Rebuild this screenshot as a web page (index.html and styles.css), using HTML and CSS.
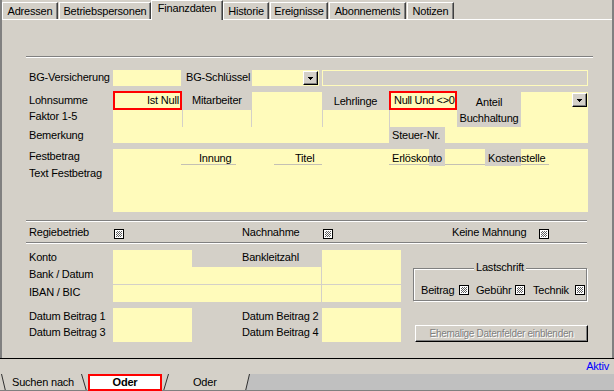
FILE: index.html
```html
<!DOCTYPE html>
<html lang="de">
<head>
<meta charset="utf-8">
<title>Finanzdaten</title>
<link rel="stylesheet" href="styles.css">
</head>
<body>
<div class="main">
  <div class="tabs">
    <div class="tab t-adr">Adressen</div>
    <div class="tab t-bet">Betriebspersonen</div>
    <div class="tab sel t-fin">Finanzdaten</div>
    <div class="tab t-his">Historie</div>
    <div class="tab t-ere">Ereignisse</div>
    <div class="tab t-abo">Abonnements</div>
    <div class="tab t-not">Notizen</div>
  </div>
  <div class="panel">
    <div class="sep sep1"></div>

    <div class="lbl l-bgv">BG-Versicherung</div>
    <div class="y f-bgv"></div>
    <div class="lbl l-bgs">BG-Schlüssel</div>
    <div class="y f-bgs"><div class="dd"><svg width="5" height="3" viewBox="0 0 5 3" shape-rendering="crispEdges"><rect x="0" y="0" width="5" height="1"/><rect x="1" y="1" width="3" height="1"/><rect x="2" y="2" width="1" height="1"/></svg></div></div>
    <div class="f-bgx"></div>

    <div class="lbl l-lohn">Lohnsumme</div>
    <div class="red red1">Ist Null</div>
    <div class="lbl l-mit">Mitarbeiter</div>
    <div class="y f-mit"></div>
    <div class="box box-lehr">Lehrlinge</div>
    <div class="red red2">Null Und &lt;&gt;0</div>
    <div class="box box-ant">Anteil<br>Buchhaltung</div>
    <div class="y f-ant"><div class="dd"><svg width="5" height="3" viewBox="0 0 5 3" shape-rendering="crispEdges"><rect x="0" y="0" width="5" height="1"/><rect x="1" y="1" width="3" height="1"/><rect x="2" y="2" width="1" height="1"/></svg></div></div>

    <div class="lbl l-fak">Faktor 1-5</div>
    <div class="faktor">
      <div class="fk fk1"></div>
      <div class="fk fk2"></div>
      <div class="fk fk3"></div>
      <div class="fk fk4"></div>
      <div class="fk fk5"></div>
    </div>
    <div class="lbl l-bem">Bemerkung</div>
    <div class="y f-bem"></div>
    <div class="box box-steu">Steuer-Nr.</div>
    <div class="y f-steu"></div>

    <div class="lbl l-fest">Festbetrag</div>
    <div class="lbl l-tfest">Text Festbetrag</div>
    <div class="y f-fest"></div>
    <div class="uline"></div>
    <div class="ul ul-inn">Innung</div>
    <div class="ul ul-tit">Titel</div>
    <div class="gbox g-erl"></div>
    <div class="gbox g-kost"></div>
    <div class="lbl l-erl">Erlöskonto</div>
    <div class="lbl l-kost">Kostenstelle</div>

    <div class="sep sep2"></div>
    <div class="lbl l-regie">Regiebetrieb</div>
    <div class="cb cb-regie"></div>
    <div class="lbl l-nach">Nachnahme</div>
    <div class="cb cb-nach"></div>
    <div class="lbl l-keine">Keine Mahnung</div>
    <div class="cb cb-keine"></div>
    <div class="sep sep3"></div>

    <div class="lbl l-konto">Konto</div>
    <div class="y f-konto"></div>
    <div class="lbl l-blz">Bankleitzahl</div>
    <div class="y f-blz"></div>
    <div class="lbl l-bank">Bank / Datum</div>
    <div class="y f-bank"></div>
    <div class="lbl l-iban">IBAN / BIC</div>
    <div class="y f-iban"></div>
    <div class="hl"></div>

    <div class="lbl l-db1">Datum Beitrag 1</div>
    <div class="lbl l-db3">Datum Beitrag 3</div>
    <div class="y f-db13"></div>
    <div class="lbl l-db2">Datum Beitrag 2</div>
    <div class="lbl l-db4">Datum Beitrag 4</div>
    <div class="y f-db24"></div>

    <div class="grp">
      <div class="grp-title"><span>Lastschrift</span></div>
      <span class="gl gl-bei">Beitrag</span><span class="cb"></span>
      <span class="gl gl-geb">Gebühr</span><span class="cb"></span>
      <span class="gl gl-tec">Technik</span><span class="cb"></span>
    </div>

    <div class="btn">Ehemalige Datenfelder einblenden</div>
  </div>
</div>
<div class="status">Aktiv</div>
<div class="navtabs">
  <svg class="navsvg" width="614" height="17" viewBox="0 0 614 17">
    <polygon points="0,0 249.5,0 245.5,17 0,17" fill="#d4d0c8"/>
    <line x1="1.5" y1="0" x2="5.5" y2="17" stroke="#303030"/>
    <line x1="81.5" y1="0" x2="86.5" y2="17" stroke="#303030"/>
    <line x1="168.5" y1="0" x2="163.5" y2="17" stroke="#303030"/>
    <line x1="249.5" y1="0" x2="245.5" y2="17" stroke="#303030"/>
    <line x1="0" y1="16.5" x2="614" y2="16.5" stroke="#808080"/>
  </svg>
  <div class="nt nt1">Suchen nach</div>
  <div class="nt nt-sel">Oder</div>
  <div class="nt nt3">Oder</div>
</div>
</body>
</html>
```

FILE: styles.css
```css
* { box-sizing: border-box; }
html, body { margin: 0; padding: 0; }
body {
  width: 614px;
  height: 391px;
  overflow: hidden;
  background: #d4d0c8;
  font-family: "Liberation Sans", Arial, sans-serif;
  font-size: 11px;
  letter-spacing: -0.2px;
  color: #000;
}

/* ---------- top frame + tabs ---------- */
.main {
  height: 358px;
  border-left: 2px solid #808080;
  border-right: 2px solid #808080;
  display: flex;
  flex-direction: column;
}
.tabs {
  display: flex;
  align-items: flex-start;
  height: 19px;
  flex: none;
  position: relative;
  z-index: 2;
}
.tab {
  height: 17px;
  margin-top: 2px;
  border-top: 1px solid #fff;
  border-left: 1px solid #fff;
  border-right: 1px solid #404040;
  box-shadow: inset -1px 0 0 #808080;
  background: #d4d0c8;
  text-align: center;
  line-height: 14px;
  padding-top: 1px;
  white-space: nowrap;
}
.tab.sel {
  height: 20px;
  margin-top: 0;
  line-height: 15px;
  padding-top: 0;
}
.t-adr { width: 56px; }
.t-bet { width: 92px; margin-left: 1px; }
.t-fin { width: 72px; }
.t-his { width: 46px; }
.t-ere { width: 58px; margin-left: 1px; }
.t-abo { width: 77px; margin-left: 1px; }
.t-not { width: 47px; margin-left: 1px; }

.panel {
  flex: 1;
  position: relative;
  border-top: 1px solid #fff;
}

/* ---------- generic controls ---------- */
.sep {
  position: absolute;
  height: 2px;
  border-top: 1px solid #808080;
  border-bottom: 1px solid #fff;
}
.sep1 { left: 24px; top: 36px; width: 567px; }
.sep2 { left: 24px; top: 200px; width: 561px; }
.sep3 { left: 24px; top: 222px; width: 561px; }

.lbl {
  position: absolute;
  line-height: 13px;
  white-space: nowrap;
}
.y {
  position: absolute;
  background: #fffbbb;
}
.box {
  position: absolute;
  background: #d4d0c8;
  white-space: nowrap;
}
.red {
  position: absolute;
  border: 2px solid #ff0000;
  background: #fffbbb;
  line-height: 15px;
  white-space: nowrap;
  overflow: hidden;
}
.dd {
  position: absolute;
  top: 1px;
  right: 1px;
  width: 15px;
  height: 14px;
  background: #d4d0c8;
  border: 1px solid;
  border-color: #fff #000 #000 #fff;
  box-shadow: inset -1px -1px 0 #808080;
  display: flex;
  align-items: center;
  justify-content: center;
}
.dd svg { display: block; fill: #000; }

.cb {
  display: block;
  width: 10px;
  height: 10px;
  border: 1px solid #000;
  padding: 1px;
  background: repeating-conic-gradient(#606060 0 25%, #ffffff 0 50%) 0 0 / 2px 2px content-box, #fff;
}
.panel > .cb { position: absolute; }

/* ---------- row 1 ---------- */
.l-bgv { left: 27px; top: 51px; }
.f-bgv { left: 111px; top: 50px; width: 68px; height: 16px; }
.l-bgs { left: 184px; top: 51px; }
.f-bgs { left: 250px; top: 50px; width: 67px; height: 16px; }
.f-bgx {
  position: absolute;
  left: 320px; top: 50px; width: 266px; height: 16px;
  border: 1px solid #fffbbb;
}

/* ---------- row 2 ---------- */
.l-lohn { left: 27px; top: 74px; }
.red1 { left: 111px; top: 71px; width: 69px; height: 19px; text-align: right; padding-right: 1px; }
.l-mit { left: 190px; top: 74px; }
.f-mit { left: 250px; top: 72px; width: 70px; height: 18px; }
.box-lehr { left: 320px; top: 72px; width: 67px; height: 18px; line-height: 18px; text-align: center; }
.red2 { left: 387px; top: 71px; width: 68px; height: 19px; padding-left: 3px; letter-spacing: -0.3px; }
.box-ant { left: 455px; top: 72px; width: 64px; height: 35px; padding-top: 2px; line-height: 16px; text-align: center; }
.f-ant { left: 519px; top: 72px; width: 67px; height: 51px; }

/* ---------- row 3/4 ---------- */
.l-fak { left: 27px; top: 90px; }
.faktor {
  position: absolute;
  left: 111px; top: 90px; width: 344px; height: 17px;
  display: flex;
}
.fk { background: #fffbbb; height: 17px; }
.fk + .fk { border-left: 1px solid #d4d0c8; }
.fk1 { width: 69px; }
.fk2 { width: 69px; }
.fk3 { width: 71px; }
.fk4 { width: 67px; }
.fk5 { width: 68px; }
.l-bem { left: 27px; top: 109px; }
.f-bem { left: 111px; top: 107px; width: 276px; height: 16px; }
.box-steu { left: 387px; top: 107px; width: 56px; height: 16px; line-height: 16px; padding-left: 3px; }
.f-steu { left: 443px; top: 107px; width: 76px; height: 16px; }

/* ---------- Festbetrag ---------- */
.l-fest { left: 27px; top: 130px; }
.l-tfest { left: 27px; top: 147px; }
.f-fest { left: 111px; top: 129px; width: 475px; height: 63px; }
.uline {
  position: absolute;
  left: 387px; top: 144px; width: 160px; height: 1px;
  background: #c4c0b4;
}
.ul {
  position: absolute;
  top: 129px;
  height: 16px;
  padding-top: 3px;
  line-height: 13px;
  border-bottom: 1px solid #c4c0b4;
  white-space: nowrap;
}
.ul-inn { left: 179px; width: 55px; padding-left: 18px; }
.ul-tit { left: 272px; width: 48px; padding-left: 21px; }
.gbox {
  position: absolute;
  top: 129px;
  height: 17px;
  background: #d4d0c8;
}
.g-erl { left: 427px; width: 16px; }
.g-kost { left: 483px; width: 36px; }
.l-erl { left: 390px; top: 132px; }
.l-kost { left: 486px; top: 132px; }

/* ---------- checkboxes row ---------- */
.l-regie { left: 27px; top: 206px; }
.cb-regie { left: 112px; top: 209px; }
.l-nach { left: 240px; top: 206px; }
.cb-nach { left: 321px; top: 209px; }
.l-keine { left: 450px; top: 206px; }
.cb-keine { left: 537px; top: 209px; }

/* ---------- Konto ---------- */
.l-konto { left: 27px; top: 231px; }
.f-konto { left: 111px; top: 230px; width: 79px; height: 17px; }
.l-blz { left: 240px; top: 231px; }
.f-blz { left: 320px; top: 230px; width: 79px; height: 52px; }
.l-bank { left: 27px; top: 248px; }
.f-bank { left: 111px; top: 247px; width: 209px; height: 17px; border-right: 1px solid #d4d0c8; }
.l-iban { left: 27px; top: 266px; }
.f-iban { left: 111px; top: 265px; width: 209px; height: 17px; border-right: 1px solid #d4d0c8; }
.hl {
  position: absolute;
  left: 111px; top: 264px; width: 288px; height: 1px;
  background: #d4d0c8;
}
.l-db1 { left: 27px; top: 290px; }
.l-db3 { left: 27px; top: 306px; }
.f-db13 { left: 111px; top: 288px; width: 79px; height: 34px; }
.l-db2 { left: 240px; top: 290px; }
.l-db4 { left: 240px; top: 306px; }
.f-db24 { left: 320px; top: 288px; width: 79px; height: 34px; }

/* ---------- Lastschrift group ---------- */
.grp {
  position: absolute;
  left: 411px; top: 248px; width: 174px; height: 33px;
  border: 1px solid #808080;
  box-shadow: inset 1px 1px 0 #fff, 1px 1px 0 #fff;
  padding: 15px 0 0 7px;
  display: flex;
  align-items: flex-start;
}
.grp-title {
  position: absolute;
  left: 0; right: 0; top: -8px;
  text-align: center;
  line-height: 13px;
}
.grp-title span { background: #d4d0c8; padding: 0 2px; }
.gl { line-height: 13px; white-space: nowrap; }
.gl-bei { width: 38px; }
.gl-geb { width: 46px; padding-left: 7px; }
.gl-tec { width: 50px; padding-left: 8px; }
.grp .cb { margin-top: 1px; flex: none; }

/* ---------- button ---------- */
.btn {
  position: absolute;
  left: 413px; top: 305px; width: 173px; height: 17px;
  border: 1px solid;
  border-color: #fff #000 #000 #fff;
  box-shadow: inset -1px -1px 0 #808080;
  font-size: 10px;
  letter-spacing: -0.3px;
  line-height: 15px;
  color: #808080;
  text-shadow: 1px 1px 0 #fff;
  text-align: center;
  white-space: nowrap;
}

/* ---------- status + navigation tabs ---------- */
.status {
  height: 16px;
  border-top: 1px solid #000;
  line-height: 15px;
  text-align: right;
  padding-right: 5px;
  color: #0000ff;
}
.navtabs {
  position: relative;
  height: 17px;
  background: #c0c0c0;
  display: flex;
}
.navsvg { position: absolute; left: 0; top: 0; }
.nt {
  position: relative;
  height: 17px;
  line-height: 13px;
  white-space: nowrap;
}
.nt1 { width: 88px; padding-left: 12px; padding-top: 2px; }
.nt-sel {
  width: 74px;
  border: 2px solid #ff0000;
  background: #fff;
  font-weight: bold;
  text-align: center;
}
.nt3 { padding-left: 31px; padding-top: 2px; }
```
